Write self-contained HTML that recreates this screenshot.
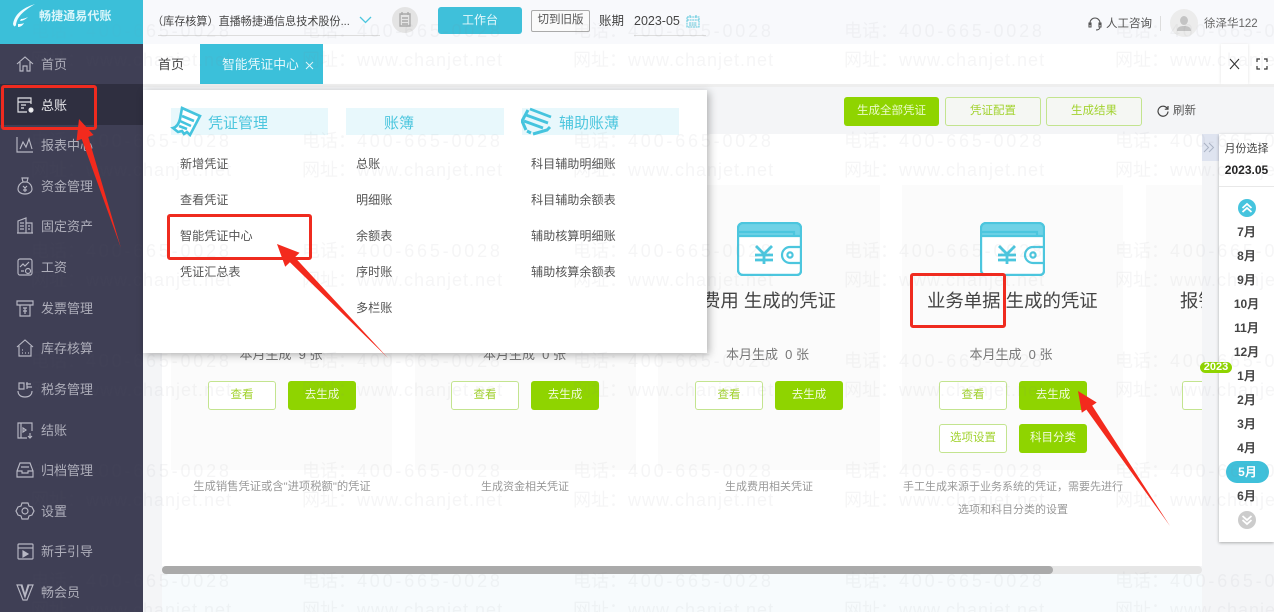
<!DOCTYPE html>
<html lang="zh-CN"><head><meta charset="utf-8"><title>畅捷通易代账</title>
<style>
html,body{margin:0;padding:0;width:1274px;height:612px;overflow:hidden;background:#fff}
body{position:relative;font-family:"Liberation Sans","Noto Sans CJK SC",sans-serif;color:#555;filter:blur(.35px)}
.a{position:absolute;white-space:nowrap}
.t{position:absolute;white-space:nowrap;line-height:20px;height:20px}
.c{text-align:center}
.si{position:absolute;left:41px;font-size:13px;line-height:20px;color:#aeaeba;white-space:nowrap}
.ic{position:absolute;left:15px;width:20px;height:20px;fill:none;stroke:#b8b8c4;stroke-width:1.15}
.hd{position:absolute;top:108px;height:27px;background:#e8f8fc}
.ht{position:absolute;top:113px;font-size:15px;line-height:22px;color:#4cc6de}
.mi{position:absolute;font-size:12.100px;line-height:20px;color:#555;white-space:nowrap}
.card{position:absolute;top:185px;height:285px;background:#fbfbfb}
.bo{position:absolute;width:66px;height:27px;border:1px solid #c3e48f;border-radius:3px;background:#fff;color:#a3d331;font-size:11.5px;line-height:27px;text-align:center}
.bf{position:absolute;width:68px;height:29px;border-radius:3px;background:#8fd400;color:#f2fbdc;font-size:11.5px;line-height:29px;text-align:center}
.tb{position:absolute;top:97px;height:27px;width:94px;border:1px solid #c3e48f;border-radius:3px;color:#a3d331;font-size:11.5px;line-height:27px;text-align:center;background:#f5f7f3}
.ds{position:absolute;font-size:11px;line-height:20px;color:#999;text-align:center;white-space:nowrap}
.cnt{position:absolute;top:345px;font-size:13px;line-height:20px;color:#777;text-align:center;white-space:pre}
.ti{position:absolute;top:288px;font-size:18.4px;line-height:26px;color:#444;white-space:nowrap}
.m{position:absolute;left:1219px;width:55px;text-align:center;font-size:12px;font-weight:bold;line-height:20px;color:#444}
.rb{position:absolute;border:3px solid #ef2b1f;border-radius:3px;box-sizing:border-box}
</style></head><body>

<!-- page backgrounds -->
<div class="a" style="left:143px;top:0;width:1131px;height:44px;background:#f8f9fc"></div>
<div class="a" style="left:143px;top:44px;width:1131px;height:43px;background:#fff"></div>
<div class="a" style="left:143px;top:87px;width:1131px;height:525px;background:#f4f5f7"></div>
<div class="a" style="left:162px;top:134px;width:1040px;height:432px;background:#fff"></div>
<div class="a" style="left:162px;top:574px;width:1040px;height:38px;background:#f7fbfd"></div>

<!-- sidebar -->
<div class="a" style="left:0;top:0;width:143px;height:612px;background:#3f3f55"></div>
<div class="a" style="left:0;top:0;width:143px;height:44px;background:#3bbfd9"></div>
<svg class="a" style="left:10px;top:3px" width="28" height="26" viewBox="0 0 28 26"><path d="M25 1C16 4 5 9 3 21c1 3 2 3 3 1C7 13 15 7 25 1zM10 18c3 0 6-2 8-4-2 1-5 2-7 2zM8 24c3 0 5-2 6-4-2 1-4 1-6 1z" fill="#f2fcff"/></svg>
<div class="t" style="left:39px;top:6px;font-size:12px;font-weight:bold;color:#d9f5fa;letter-spacing:.1px">畅捷通易代账</div>
<div class="a" style="left:0;top:84px;width:143px;height:41px;background:#2f2f40"></div>

<svg class="ic" style="top:54px" viewBox="0 0 20 20"><path d="M2 10l8-7 8 7M5 8v9h3v-5h4v5h3V8"/></svg>
<svg class="ic" style="top:95px;stroke:#e4e4e8" viewBox="0 0 20 20"><path d="M16 9V3H3v14h9M3 7h13M6 10h5M6 13h3"/><circle cx="16" cy="15" r="2" fill="#eee"/></svg>
<svg class="ic" style="top:135px" viewBox="0 0 20 20"><path d="M2 2v15h16M5 14l3-7 3 5 3-8 3 10"/></svg>
<svg class="ic" style="top:176px" viewBox="0 0 20 20"><path d="M7 2h6l-1 4c3 1 5 4 5 7 0 3-3 5-7 5s-7-2-7-5c0-3 2-6 5-7zM8 6h4M8 10l2 2 2-2M10 12v4M8 14h4"/></svg>
<svg class="ic" style="top:216px" viewBox="0 0 20 20"><path d="M3 17V5l8-3v15M11 7h6v10M2 17h16M5 7h4M5 10h4M5 13h4M13 10h2M13 13h2"/></svg>
<svg class="ic" style="top:257px" viewBox="0 0 20 20"><rect x="3" y="2" width="14" height="16" rx="2"/><path d="M5 10l3-3 2 2 4-4M6 14h3"/><circle cx="13" cy="14" r="2.5"/></svg>
<svg class="ic" style="top:298px" viewBox="0 0 20 20"><path d="M2 3h16v4H2zM5 7v11h10V7M8 10h4M8 13h4M10 10v6"/></svg>
<svg class="ic" style="top:338px" viewBox="0 0 20 20"><path d="M2 9l8-7 8 7M4 8v10h12V8M7 15h1M10 15h1M13 15h1M7 12h1"/></svg>
<svg class="ic" style="top:379px" viewBox="0 0 20 20"><path d="M3 12c0 4 3 6 7 6s7-2 7-6M4 4h5v6H4zM12 3v7M11 5h5M12 8h5"/></svg>
<svg class="ic" style="top:420px" viewBox="0 0 20 20"><path d="M17 11V3H3v15h9M6 3v15M15 13v5M13 16l2 2 2-2M8 8l3 2-3 2z"/></svg>
<svg class="ic" style="top:460px" viewBox="0 0 20 20"><path d="M5 3h10l3 8v6H2v-6zM2 11h5v2h6v-2h5M6 7h8"/></svg>
<svg class="ic" style="top:501px" viewBox="0 0 20 20"><path d="M7 2h6l1 3 3 1 2 4-2 4-3 1-1 3H7l-1-3-3-1-2-4 2-4 3-1z"/><circle cx="10" cy="10" r="3"/></svg>
<svg class="ic" style="top:541px" viewBox="0 0 20 20"><rect x="3" y="3" width="15" height="15" rx="1"/><path d="M3 7h15"/><path d="M8 10l5 3-5 3z" fill="#b8b8c4"/></svg>
<svg class="ic" style="top:582px" viewBox="0 0 20 20"><path d="M2 3h5l3 10 3-10h5l-6 15H8zM6 3l4 12 4-12"/></svg>

<div class="si" style="top:55px">首页</div>
<div class="si" style="top:96px;color:#e4e4e8">总账</div>
<div class="si" style="top:136px">报表中心</div>
<div class="si" style="top:177px">资金管理</div>
<div class="si" style="top:217px">固定资产</div>
<div class="si" style="top:258px">工资</div>
<div class="si" style="top:299px">发票管理</div>
<div class="si" style="top:339px">库存核算</div>
<div class="si" style="top:380px">税务管理</div>
<div class="si" style="top:421px">结账</div>
<div class="si" style="top:461px">归档管理</div>
<div class="si" style="top:502px">设置</div>
<div class="si" style="top:542px">新手引导</div>
<div class="si" style="top:583px">畅会员</div>

<!-- top bar -->
<div class="t" style="left:152px;top:12px;font-size:11.100px;color:#444;width:205px">（库存核算）直播畅捷通信息技术股份...</div>
<div class="a" style="left:158px;top:35px;width:222px;height:1px;background:#ddd"></div>
<svg class="a" style="left:359px;top:16px" width="13" height="8"><path d="M1 1l5.500 5.500L12 1" fill="none" stroke="#4cc6de" stroke-width="1.300"/></svg>
<div class="a" style="left:392px;top:7px;width:26px;height:26px;border-radius:50%;background:#e4e4e4"></div>
<svg class="a" style="left:398px;top:12px" width="14" height="16"><path d="M2 2h10v12H2zM4 6h6M4 9h6M4 12h6M4 0v3M10 0v3" fill="none" stroke="#aaa" stroke-width="1.400"/></svg>
<div class="a c" style="left:438px;top:7px;width:84px;height:27px;background:#3fc0da;border-radius:3px;color:#e5f8fc;font-size:12px;line-height:27px">工作台</div>
<div class="a c" style="left:531px;top:10px;width:57px;height:20px;border:1px solid #aaa;border-radius:2px;color:#555;font-size:11.5px;line-height:19px;background:#fafafa">切到旧版</div>
<div class="t" style="left:599px;top:11px;font-size:12.5px;color:#444">账期</div>
<div class="t" style="left:634px;top:11px;font-size:12.5px;color:#444">2023-05</div>
<div class="a" style="left:634px;top:35px;width:72px;height:1px;background:#ddd"></div>
<svg class="a" style="left:686px;top:14px" width="14" height="14"><path d="M1 3h12v10H1zM1 6h12M4 1v3M10 1v3M3 9h8M3 11h8" fill="none" stroke="#5cc8dc" stroke-width="1" stroke-dasharray="2 .6"/></svg>
<svg class="a" style="left:1088px;top:16px" width="14" height="16"><path d="M2 9V7a5 5 0 0 1 10 0v2M1 7h2v4H1zM11 7h2v4h-2zM12 11c0 2-2 3-4 3" fill="none" stroke="#555" stroke-width="1.100"/></svg>
<div class="t" style="left:1106px;top:14px;font-size:11.500px;color:#555">人工咨询</div>
<div class="a" style="left:1160px;top:16px;width:1px;height:15px;background:#ddd"></div>
<div class="a" style="left:1170px;top:9px;width:28px;height:28px;border-radius:50%;background:#ececec"></div>
<svg class="a" style="left:1176px;top:15px" width="16" height="17"><path d="M8 1a3.500 4 0 0 1 0 9 3.500 4 0 0 1 0-9zM1 16c0-4 3-5 7-5s7 1 7 5z" fill="#c4c4c4"/></svg>
<div class="t" style="left:1204px;top:14px;font-size:11.5px;color:#666">徐泽华122</div>

<!-- tab bar -->
<div class="t" style="left:158px;top:55px;font-size:13px;color:#444">首页</div>
<div class="a" style="left:200px;top:44px;width:123px;height:40px;background:#3bc0da"></div>
<div class="t" style="left:222px;top:55px;font-size:12.800px;color:#e5f8fc">智能凭证中心</div>
<svg class="a" style="left:305px;top:61px" width="9" height="9"><path d="M1 1l7 7M8 1l-7 7" stroke="#e5f8fc" stroke-width="1"/></svg>
<div class="a" style="left:143px;top:84px;width:1131px;height:3px;background:#eee"></div>
<div class="a" style="left:1221px;top:44px;width:27px;height:40px;background:#fff;box-shadow:-1px 0 2px #f0f0f0,1px 0 2px #f0f0f0"></div>
<svg class="a" style="left:1229px;top:58px" width="11" height="12"><path d="M1 1l9 10M10 1L1 11" stroke="#333" stroke-width="1.100"/></svg>
<svg class="a" style="left:1256px;top:58px" width="12" height="12"><path d="M1 4V1h3M8 1h3v3M11 8v3H8M4 11H1V8" fill="none" stroke="#333" stroke-width="1.200"/></svg>

<!-- toolbar -->
<div class="a c" style="left:844px;top:97px;width:95px;height:29px;background:#8fd400;border-radius:3px;color:#eafbc8;font-size:11.500px;line-height:29px">生成全部凭证</div>
<div class="tb" style="left:945px">凭证配置</div>
<div class="tb" style="left:1046px">生成结果</div>
<svg class="a" style="left:1157px;top:105px" width="12" height="12"><path d="M10.500 4A5 5 0 1 0 11 6.500M11 1v3.200H7.800" fill="none" stroke="#444" stroke-width="1.200"/></svg>
<div class="t" style="left:1173px;top:101px;font-size:11.500px;color:#555">刷新</div>

<!-- cards -->
<div class="card" style="left:171px;width:221px"></div>
<div class="card" style="left:415px;width:221px"></div>
<div class="card" style="left:658px;width:222px"></div>
<div class="card" style="left:902px;width:221px"></div>
<div class="card" style="left:1146px;width:56px"></div>

<svg class="a" style="left:737px;top:222px" width="65" height="54" viewBox="0 0 65 54"><use href="#w"/></svg>
<svg class="a" style="left:980px;top:222px" width="65" height="54" viewBox="0 0 65 54"><g id="w" fill="none" stroke="#4cc6de" stroke-width="2.200"><path d="M1 6a5 5 0 0 1 5-5h53a5 5 0 0 1 5 5v43a4 4 0 0 1-4 4H6a5 5 0 0 1-5-5z" fill="#fff"/><path d="M1 6a5 5 0 0 1 5-5h53a5 5 0 0 1 5 5v9H1z" fill="#6fd2e6" stroke="none"/><path d="M1 10h56v4M1 14h63" stroke="#4cc6de"/><path d="M1 6a5 5 0 0 1 5-5h53a5 5 0 0 1 5 5v43a4 4 0 0 1-4 4H6a5 5 0 0 1-5-5z"/><path d="M64 25H53a8 8 0 0 0 0 16h11"/><circle cx="53" cy="33" r="2.600"/><path d="M19 24l8 8 8-8M27 32v10M18 33h18M18 38h18" stroke-width="2.800"/></g></svg>

<div class="ti" style="left:702px">费用 生成的凭证</div>
<div class="ti" style="left:927px">业务单据 生成的凭证</div>
<div class="a" style="left:1180px;top:288px;width:22px;height:26px;overflow:hidden;font-size:18.400px;line-height:26px;color:#444;white-space:nowrap">报销单</div>

<div class="cnt" style="left:171px;width:220px">本月生成  9 张</div>
<div class="cnt" style="left:414px;width:221px">本月生成  0 张</div>
<div class="cnt" style="left:657px;width:221px">本月生成  0 张</div>
<div class="cnt" style="left:901px;width:220px">本月生成  0 张</div>

<div class="bo" style="left:208px;top:381px">查看</div><div class="bf" style="left:288px;top:381px">去生成</div>
<div class="bo" style="left:451px;top:381px">查看</div><div class="bf" style="left:531px;top:381px">去生成</div>
<div class="bo" style="left:695px;top:381px">查看</div><div class="bf" style="left:775px;top:381px">去生成</div>
<div class="bo" style="left:939px;top:381px">查看</div><div class="bf" style="left:1019px;top:381px">去生成</div>
<div class="bo" style="left:939px;top:424px">选项设置</div><div class="bf" style="left:1019px;top:424px">科目分类</div>
<div class="a" style="left:1182px;top:381px;width:20px;height:29px;border:1px solid #c3e48f;border-right:0;box-sizing:border-box;border-radius:3px 0 0 3px;background:#fff"></div>

<div class="ds" style="left:162px;width:240px;top:477px;font-size:11.300px">生成销售凭证或含"进项税额"的凭证</div>
<div class="ds" style="left:405px;width:240px;top:477px">生成资金相关凭证</div>
<div class="ds" style="left:649px;width:240px;top:477px">生成费用相关凭证</div>
<div class="ds" style="left:893px;width:240px;top:477px">手工生成来源于业务系统的凭证，需要先进行</div>
<div class="ds" style="left:893px;width:240px;top:500px">选项和科目分类的设置</div>

<!-- scrollbar -->
<div class="a" style="left:162px;top:566px;width:1040px;height:8px;background:#e6e6e6;border-radius:4px"></div>
<div class="a" style="left:162px;top:566px;width:891px;height:8px;background:#aaa;border-radius:4px"></div>

<!-- month picker -->
<div class="a" style="left:1202px;top:134px;width:17px;height:27px;background:#dfe4f0"></div>
<svg class="a" style="left:1203px;top:142px" width="13" height="11"><path d="M1 1l4.500 4.500L1 10M6 1l4.500 4.500L6 10" fill="none" stroke="#aab2c4" stroke-width="1"/></svg>
<div class="a" style="left:1219px;top:134px;width:55px;height:408px;background:#fff;box-shadow:0 1px 3px rgba(0,0,0,.3)"></div>
<div class="a" style="left:1219px;top:186px;width:55px;height:1px;background:#e8e8e8"></div>
<div class="a c" style="left:1219px;top:139px;width:55px;font-size:11px;line-height:20px;color:#444">月份选择</div>
<div class="a c" style="left:1219px;top:160px;width:55px;font-size:12px;font-weight:bold;line-height:20px;color:#222">2023.05</div>
<svg class="a" style="left:1238px;top:199px" width="18" height="18"><circle cx="9" cy="9" r="9" fill="#45c4de"/><path d="M4.500 9l4.500-4 4.500 4M4.500 13l4.500-4 4.500 4" fill="none" stroke="#fff" stroke-width="1.800"/></svg>
<div class="m" style="top:222px">7月</div>
<div class="m" style="top:246px">8月</div>
<div class="m" style="top:270px">9月</div>
<div class="m" style="top:294px">10月</div>
<div class="m" style="top:318px">11月</div>
<div class="m" style="top:342px">12月</div>
<div class="a c" style="left:1200px;top:362px;width:32px;height:11px;border-radius:6px;background:#8fd400;color:#fff;font-size:11px;font-weight:bold;line-height:11px">2023</div>
<div class="m" style="top:366px">1月</div>
<div class="m" style="top:390px">2月</div>
<div class="m" style="top:414px">3月</div>
<div class="m" style="top:438px">4月</div>
<div class="a" style="left:1226px;top:461px;width:43px;height:22px;border-radius:11px;background:#3fc0da"></div>
<div class="m" style="top:462px;left:1220px;color:#fff">5月</div>
<div class="m" style="top:486px">6月</div>
<svg class="a" style="left:1238px;top:511px" width="18" height="18"><circle cx="9" cy="9" r="9" fill="#ccc"/><path d="M4.500 5l4.500 4 4.500-4M4.500 9l4.500 4 4.500-4" fill="none" stroke="#fff" stroke-width="1.800"/></svg>

<!-- dropdown -->
<div class="a" style="left:143px;top:90px;width:564px;height:263px;background:#fff;box-shadow:2px 2px 8px rgba(0,0,0,.3)"></div>
<div class="hd" style="left:171px;width:157px"></div>
<div class="hd" style="left:346px;width:158px"></div>
<div class="hd" style="left:522px;width:157px"></div>
<svg class="a" style="left:170px;top:106px" width="32" height="31" viewBox="0 0 32 31"><g fill="none" stroke="#45c4de" stroke-width="2.600"><path d="M12 2l18 8-10 19-3-3-3 2-2-3-4 1-5-4c4-1 6-5 7-9z" fill="#fff"/><path d="M12 10l12 5M10 15l11 5M9 20l8 3"/></g></svg>
<svg class="a" style="left:521px;top:107px" width="32" height="29" viewBox="0 0 32 29"><g fill="none" stroke="#45c4de" stroke-width="2.800"><path d="M9 2l21 8M5 8l22 8M3 14l19 7"/><path d="M7 3L1 14l4 9M6 24l4 2M12 27l14-4 3-3" stroke-width="3"/></g></svg>
<div class="ht" style="left:208px">凭证管理</div>
<div class="ht" style="left:384px">账簿</div>
<div class="ht" style="left:559px">辅助账薄</div>

<div class="mi" style="left:180px;top:154px">新增凭证</div>
<div class="mi" style="left:180px;top:190px">查看凭证</div>
<div class="mi" style="left:180px;top:226px">智能凭证中心</div>
<div class="mi" style="left:180px;top:262px">凭证汇总表</div>
<div class="mi" style="left:356px;top:154px">总账</div>
<div class="mi" style="left:356px;top:190px">明细账</div>
<div class="mi" style="left:356px;top:226px">余额表</div>
<div class="mi" style="left:356px;top:262px">序时账</div>
<div class="mi" style="left:356px;top:298px">多栏账</div>
<div class="mi" style="left:531px;top:154px">科目辅助明细账</div>
<div class="mi" style="left:531px;top:190px">科目辅助余额表</div>
<div class="mi" style="left:531px;top:226px">辅助核算明细账</div>
<div class="mi" style="left:531px;top:262px">辅助核算余额表</div>

<!-- watermark -->
<svg class="a" style="left:0;top:0;pointer-events:none" width="1274" height="612">
<defs><pattern id="wm" x="31" y="0" width="271" height="110" patternUnits="userSpaceOnUse">
<text y="37" font-family="Liberation Sans,Noto Sans CJK SC,sans-serif" font-size="18" fill="#7d7d87"><tspan x="0">电话：</tspan><tspan x="55" letter-spacing="2.800">400-665-0028</tspan></text>
<text y="66" font-family="Liberation Sans,Noto Sans CJK SC,sans-serif" font-size="18" fill="#7d7d87"><tspan x="0">网址：</tspan><tspan x="55" letter-spacing="1">www.chanjet.net</tspan></text>
</pattern></defs>
<rect x="143" width="1131" height="612" fill="url(#wm)" opacity=".075"/>
<rect width="143" height="612" fill="url(#wm)" opacity=".025"/>
</svg>

<!-- annotations -->
<div class="rb" style="left:1px;top:85px;width:96px;height:45px"></div>
<div class="rb" style="left:167px;top:214px;width:145px;height:46px"></div>
<div class="rb" style="left:910px;top:273px;width:96px;height:55px"></div>
<svg class="a" style="left:0;top:0" width="1274" height="612">
<polygon fill="#f32a1d" points="79,119 93.500,135 88.300,137 121,248 81.700,139 76.500,141"/>
<polygon fill="#f32a1d" points="277,244 299.500,252.800 294.900,257.400 388,358 289.900,262.200 285.200,266.800"/>
<polygon fill="#f32a1d" points="1078,391 1096.700,402.500 1092.200,405.600 1170,526 1086.400,409.600 1081.800,412.700"/>
</svg>
</body></html>
